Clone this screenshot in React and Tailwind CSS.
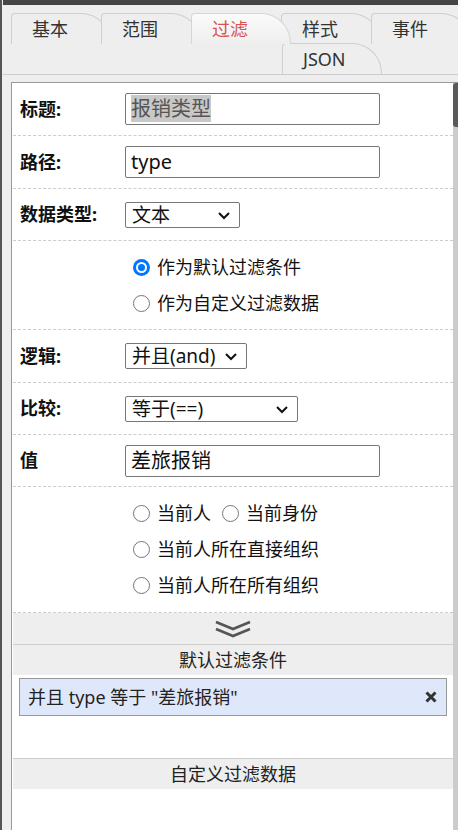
import React from "react";

const FONT = "font-['Noto_Sans','Noto_Sans_CJK_SC',sans-serif]";

function Tab({ label, active, last }) {
  return (
    <div
      className={
        "relative h-[31px] w-[100px] shrink-0 border-l border-t border-r rounded-tl-[4px] rounded-tr-[30px] pl-[20px] text-[18px] leading-[30px] " +
        (last ? "" : "-mr-[10px] ") +
        (active
          ? "z-10 border-[#d6d6d6] bg-gradient-to-b from-[#fbfbfb] to-[#eeeeee] text-[#d9534f]"
          : "border-[#cfcfcf] bg-[#eeeeee] text-[#333]")
      }
    >
      {label}
    </div>
  );
}

function Chevron() {
  return (
    <svg width="14" height="10" viewBox="0 0 14 10" className="absolute right-[8px] top-1/2 -translate-y-1/2">
      <polyline points="2,3 7,8 12,3" fill="none" stroke="#111" strokeWidth="2" />
    </svg>
  );
}

function Select({ value, w }) {
  return (
    <div className={"relative h-[26px] border border-[#767676] rounded-[2px] bg-white pl-[6px] text-[19px] leading-[24px] text-[#111] " + w}>
      {value}
      <Chevron />
    </div>
  );
}

function Input({ children }) {
  return (
    <div className="h-[32px] w-[255px] border border-[#767676] rounded-[2px] bg-white pl-[5px] text-[20px] leading-[30px] text-[#111]">
      {children}
    </div>
  );
}

function Row({ label, children, h }) {
  return (
    <div className={"flex items-center border-b border-dashed border-[#cccccc] " + h}>
      <div className="w-[112px] shrink-0 pl-[7px] text-[18px] font-bold text-[#111]">{label}</div>
      {children}
    </div>
  );
}

function Radio({ checked, label }) {
  return (
    <div className="flex h-[36px] items-center gap-[7px] text-[18px] text-[#111]">
      {checked ? (
        <span className="w-[17px] h-[17px] rounded-full bg-[#0075ff] flex items-center justify-center">
          <span className="w-[11px] h-[11px] rounded-full bg-[#0075ff] border-[2px] border-white" />
        </span>
      ) : (
        <span className="w-[17px] h-[17px] rounded-full border border-[#767676] bg-white" />
      )}
      <span>{label}</span>
    </div>
  );
}

export default function App() {
  return (
    <div className={"flex h-[830px] w-[458px] overflow-hidden bg-[#eeeeee] " + FONT}>
      <div className="w-[2px] shrink-0 bg-[#555]" />
      <div className="w-px shrink-0 bg-[#eeeeee]" />
      <div className="flex min-w-0 flex-1 flex-col">
        <div className="h-[5px] shrink-0 bg-[#454545]" />
        {/* tabs */}
        <div className="shrink-0 border-b border-[#cccccc] pl-[8px] pt-[8px] overflow-hidden">
          <div className="flex h-[30px]">
            <Tab label="基本" />
            <Tab label="范围" />
            <Tab label="过滤" active />
            <Tab label="样式" />
            <Tab label="事件" last />
          </div>
          <div className="flex h-[31px] pl-[271px]">
            <Tab label="JSON" last />
          </div>
        </div>
        {/* content panel */}
        <div className="ml-[8px] mt-[7px] flex min-h-0 flex-1 border-l border-t border-[#999]">
          <div className="flex min-w-0 flex-1 flex-col bg-white pl-[1px]">
            <Row label="标题:" h="h-[53px]">
              <Input>
                <span className="bg-[#c8c8c8] text-[#555]">报销类型</span>
              </Input>
            </Row>
            <Row label="路径:" h="h-[53px]">
              <Input>type</Input>
            </Row>
            <Row label="数据类型:" h="h-[52px]">
              <Select value="文本" w="w-[115px]" />
            </Row>
            <div className="flex h-[89px] flex-col justify-center border-b border-dashed border-[#cccccc] pl-[120px]">
              <Radio checked label="作为默认过滤条件" />
              <Radio label="作为自定义过滤数据" />
            </div>
            <Row label="逻辑:" h="h-[53px]">
              <Select value="并且(and)" w="w-[122px]" />
            </Row>
            <Row label="比较:" h="h-[52px]">
              <Select value="等于(==)" w="w-[173px]" />
            </Row>
            <Row label="值" h="h-[52px]">
              <Input>差旅报销</Input>
            </Row>
            <div className="flex h-[126px] flex-col justify-center border-b border-dashed border-[#cccccc] pl-[120px]">
              <div className="flex gap-[11px]">
                <Radio label="当前人" />
                <Radio label="当前身份" />
              </div>
              <Radio label="当前人所在直接组织" />
              <Radio label="当前人所在所有组织" />
            </div>
            <div className="flex h-[32px] shrink-0 items-center justify-center border-b border-[#cccccc] bg-[#eeeeee]">
              <svg width="38" height="20" viewBox="0 0 38 20">
                <polyline points="2,3 19,10 36,3" fill="none" stroke="#555" strokeWidth="2.6" />
                <polyline points="2,10 19,17 36,10" fill="none" stroke="#555" strokeWidth="2.6" />
              </svg>
            </div>
            <div className="flex h-[30px] shrink-0 items-center justify-center bg-[#eeeeee] text-[18px] text-[#222]">
              默认过滤条件
            </div>
            <div className="h-[84px] shrink-0 border-b border-[#cccccc] px-[6px] pt-[3px]">
              <div className="flex h-[38px] items-center justify-between border border-[#999] bg-[#dfe8fb] pl-[8px] pr-[8px] text-[18px] text-[#222]">
                <span>并且 type 等于 "差旅报销"</span>
                <svg width="14" height="14" viewBox="0 0 14 14">
                  <path d="M2.5 2.5 L11.5 11.5 M11.5 2.5 L2.5 11.5" stroke="#333" strokeWidth="3" />
                </svg>
              </div>
            </div>
            <div className="flex h-[30px] shrink-0 items-center justify-center bg-[#eeeeee] text-[18px] text-[#222]">
              自定义过滤数据
            </div>
            <div className="flex-1 bg-white" />
          </div>
          <div className="w-[5px] shrink-0 bg-[#cccccc]">
            <div className="h-[44px] rounded-l-[3px] bg-[#5a5a5a]" />
          </div>
        </div>
      </div>
    </div>
  );
}
